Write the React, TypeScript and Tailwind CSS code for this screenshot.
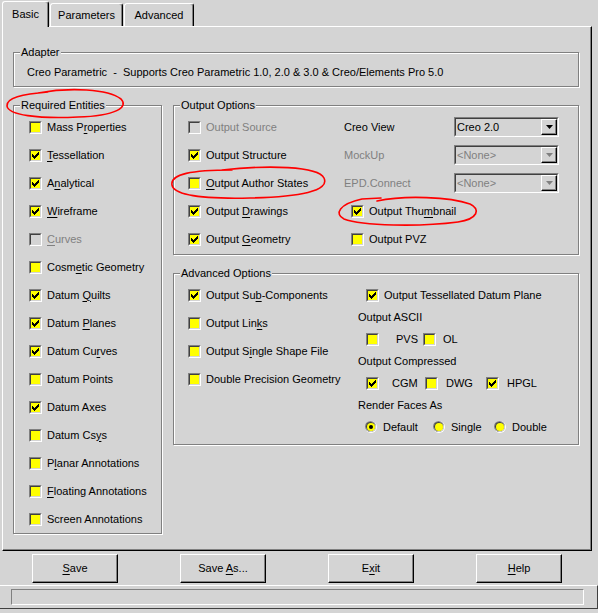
import React from "react";

// 7x7 pixel check glyph used inside the classic checkbox
const CHECK: [number, number][] = [
  [6, 0], [5, 1], [6, 1], [0, 2], [4, 2], [5, 2], [6, 2],
  [0, 3], [1, 3], [3, 3], [4, 3], [5, 3],
  [0, 4], [1, 4], [2, 4], [3, 4], [4, 4],
  [1, 5], [2, 5], [3, 5], [2, 6],
];

// "&" marks the mnemonic letter, like a Win32 resource string
function Mn({ text }: { text: string }) {
  const i = text.indexOf("&");
  if (i < 0) return <span>{text}</span>;
  return (
    <span className="whitespace-pre">
      {text.slice(0, i)}
      <u className="underline-offset-[2px]">{text[i + 1]}</u>
      {text.slice(i + 2)}
    </span>
  );
}

function Box({ checked, disabled }: { checked?: boolean; disabled?: boolean }) {
  return (
    <span className="block w-[13px] h-[13px] shrink-0 border border-t-[#808080] border-l-[#808080] border-r-white border-b-white">
      <span
        className={`flex w-[11px] h-[11px] items-center justify-center border border-t-[#404040] border-l-[#404040] border-r-[#d4d4d4] border-b-[#d4d4d4] ${
          disabled ? "bg-[#d4d4d4]" : "bg-[#ffff00]"
        }`}
      >
        {checked && (
          <svg width="7" height="7" viewBox="0 0 7 7" shapeRendering="crispEdges">
            {CHECK.map(([x, y]) => (
              <rect key={`${x}-${y}`} x={x} y={y} width="1" height="1" fill="#000" />
            ))}
          </svg>
        )}
      </span>
    </span>
  );
}

function Radio({ on }: { on?: boolean }) {
  return (
    <svg width="12" height="12" viewBox="0 0 12 12" className="shrink-0">
      <circle cx="6" cy="6" r="6" fill="#ffffff" />
      <circle cx="5.5" cy="5.5" r="5.5" fill="#808080" />
      <circle cx="6" cy="6" r="5" fill="#d4d4d4" />
      <circle cx="5.5" cy="5.5" r="4.5" fill="#404040" />
      <circle cx="6" cy="6" r="4" fill="#ffff00" />
      {on && <circle cx="6" cy="6" r="2" fill="#000" />}
    </svg>
  );
}

function CheckRow({ text, checked, disabled }: { text: string; checked?: boolean; disabled?: boolean }) {
  return (
    <div className="flex h-[28px] items-center gap-[5px]">
      <Box checked={checked} disabled={disabled} />
      <span className={disabled ? "text-[#808080]" : ""}>
        <Mn text={text} />
      </span>
    </div>
  );
}

function Group({ title, className, children }: { title: string; className: string; children: React.ReactNode }) {
  return (
    <div className={`relative border border-[#808080] shadow-[inset_1px_1px_0_#ffffff,1px_1px_0_#ffffff] ${className}`}>
      <span className="absolute left-[6px] -top-[8px] bg-[#d4d4d4] px-[1px] leading-[14px]">{title}</span>
      {children}
    </div>
  );
}

function Combo({ value, disabled }: { value: string; disabled?: boolean }) {
  return (
    <div className="flex w-[105px] h-[20px] border border-t-[#808080] border-l-[#808080] border-r-white border-b-white">
      <div className="flex flex-1 border border-t-[#404040] border-l-[#404040] border-r-[#d4d4d4] border-b-[#d4d4d4]">
        <span className={`flex-1 pl-[1px] leading-[16px] ${disabled ? "text-[#808080]" : ""}`}>{value}</span>
        <span className="flex w-[16px] items-center justify-center border border-t-white border-l-white border-r-black border-b-black shadow-[inset_-1px_-1px_0_#808080]">
          <svg width="7" height="4" viewBox="0 0 7 4">
            <polygon points="0,0 7,0 3.5,4" fill={disabled ? "#808080" : "#000"} />
          </svg>
        </span>
      </div>
    </div>
  );
}

function Btn({ text }: { text: string }) {
  return (
    <button className="flex w-[86px] h-[29px] items-center justify-center border border-t-white border-l-white border-r-black border-b-black bg-[#d4d4d4] shadow-[inset_-1px_-1px_0_#808080]">
      <Mn text={text} />
    </button>
  );
}

const required: { text: string; checked?: boolean; disabled?: boolean }[] = [
  { text: "Mass P&roperties" },
  { text: "&Tessellation", checked: true },
  { text: "A&nalytical", checked: true },
  { text: "&Wireframe", checked: true },
  { text: "&Curves", disabled: true },
  { text: "Cosm&etic Geometry" },
  { text: "Datum &Quilts", checked: true },
  { text: "Datum &Planes", checked: true },
  { text: "Datum Cu&rves", checked: true },
  { text: "Datum Points" },
  { text: "Datum Axes", checked: true },
  { text: "Datum Cs&ys" },
  { text: "P&lanar Annotations" },
  { text: "&Floating Annotations" },
  { text: "Screen Annotations" },
];

export default function App() {
  return (
    <div className="relative w-[598px] h-[613px] overflow-hidden bg-[#d4d4d4] text-[11px] leading-[13px] text-black font-['Liberation_Sans',Arial,sans-serif]">
      {/* tab strip */}
      <div className="flex h-[26px] items-end gap-[1px] pl-[2px]">
        <div className="relative z-10 -mb-px flex h-[26px] w-[47px] items-center justify-center rounded-t-[3px] border-t border-l border-r border-t-white border-l-white border-r-black bg-[#d4d4d4] shadow-[inset_-1px_0_0_#808080]">
          Basic
        </div>
        <div className="flex h-[23px] w-[73px] items-center justify-center rounded-t-[3px] border-t border-l border-r border-t-white border-l-white border-r-black shadow-[inset_-1px_0_0_#808080]">
          Parameters
        </div>
        <div className="flex h-[23px] w-[70px] items-center justify-center rounded-t-[3px] border-t border-l border-r border-t-white border-l-white border-r-black shadow-[inset_-1px_0_0_#808080]">
          Advanced
        </div>
      </div>

      {/* Basic page */}
      <div className="ml-[2px] w-[590px] h-[525px] border border-t-white border-l-white border-r-black border-b-black pl-[10px] pt-[25px] shadow-[inset_-1px_-1px_0_#808080]">
        <Group title="Adapter" className="w-[566px] h-[35px]">
          <div className="whitespace-pre pl-[13px] pt-[13px]">
            Creo Parametric  -  Supports Creo Parametric 1.0, 2.0 &amp; 3.0 &amp; Creo/Elements Pro 5.0
          </div>
        </Group>

        <div className="mt-[18px] flex items-start gap-[11px]">
          <Group title="Required Entities" className="w-[149px] h-[429px]">
            <div className="pl-[15px] pt-[7px]">
              {required.map((r) => (
                <CheckRow key={r.text} {...r} />
              ))}
            </div>
          </Group>

          <div className="flex flex-col">
            <Group title="Output Options" className="w-[406px] h-[150px]">
              <div className="flex pt-[7px]">
                <div className="w-[170px] pl-[14px]">
                  <CheckRow text="Output Source" disabled />
                  <CheckRow text="Output Structure" checked />
                  <CheckRow text="&Output Author States" />
                  <CheckRow text="Output &Drawings" checked />
                  <CheckRow text="Output &Geometry" checked />
                </div>
                <div className="flex-1">
                  <div className="flex h-[28px] items-center">
                    <span className="w-[110px]">Creo View</span>
                    <Combo value="Creo 2.0" />
                  </div>
                  <div className="flex h-[28px] items-center text-[#808080]">
                    <span className="w-[110px]">MockUp</span>
                    <Combo value="<None>" disabled />
                  </div>
                  <div className="flex h-[28px] items-center text-[#808080]">
                    <span className="w-[110px]">EPD.Connect</span>
                    <Combo value="<None>" disabled />
                  </div>
                  <div className="pl-[7px]">
                    <CheckRow text="Output Thu&mbnail" checked />
                    <CheckRow text="Output PVZ" />
                  </div>
                </div>
              </div>
            </Group>

            <Group title="Advanced Options" className="mt-[18px] w-[406px] h-[172px]">
              <div className="flex">
                <div className="w-[184px] pl-[14px] pt-[7px]">
                  <CheckRow text="Output Su&b-Components" checked />
                  <CheckRow text="Output Lin&ks" />
                  <CheckRow text="Output S&ingle Shape File" />
                  <CheckRow text="Double Precision Geometry" />
                </div>
                <div className="flex-1 pt-[10px]">
                  <div className="flex h-[22px] items-center gap-[5px] pl-[8px]">
                    <Box checked />
                    <span>Output Tessellated Datum Plane</span>
                  </div>
                  <div className="flex h-[22px] items-center">Output ASCII</div>
                  <div className="flex h-[22px] items-center pl-[8px]">
                    <div className="flex w-[57px] items-center">
                      <Box />
                      <span className="ml-[17px]">PVS</span>
                    </div>
                    <div className="flex items-center">
                      <Box />
                      <span className="ml-[7px]">OL</span>
                    </div>
                  </div>
                  <div className="flex h-[22px] items-center">Output Compressed</div>
                  <div className="flex h-[22px] items-center pl-[8px]">
                    <div className="flex w-[59px] items-center">
                      <Box checked />
                      <span className="ml-[13px]">CGM</span>
                    </div>
                    <div className="flex w-[61px] items-center">
                      <Box />
                      <span className="ml-[8px]">DWG</span>
                    </div>
                    <div className="flex items-center">
                      <Box checked />
                      <span className="ml-[8px]">HPGL</span>
                    </div>
                  </div>
                  <div className="flex h-[22px] items-center">Render Faces As</div>
                  <div className="flex h-[22px] items-center pl-[7px]">
                    <div className="flex w-[68px] items-center gap-[6px]">
                      <Radio on />
                      <span>Default</span>
                    </div>
                    <div className="flex w-[61px] items-center gap-[6px]">
                      <Radio />
                      <span>Single</span>
                    </div>
                    <div className="flex items-center gap-[6px]">
                      <Radio />
                      <span>Double</span>
                    </div>
                  </div>
                </div>
              </div>
            </Group>
          </div>
        </div>
      </div>

      {/* command buttons */}
      <div className="mt-[3px] ml-[32px] flex w-[530px] justify-between">
        <Btn text="&Save" />
        <Btn text="Save &As..." />
        <Btn text="E&xit" />
        <Btn text="&Help" />
      </div>

      {/* status line */}
      <div className="mt-[2px] h-[24px] border-t border-b border-r border-t-white border-b-[#404040] border-r-[#404040] pl-[11px] pt-[3px]">
        <div className="h-[16px] w-[573px] border border-t-[#808080] border-l-[#808080] border-r-white border-b-white" />
      </div>

      {/* red pen marks drawn over the dialog */}
      <svg className="pointer-events-none absolute inset-0" width="598" height="613" viewBox="0 0 598 613" fill="none" stroke="#ff0000" strokeWidth="1.6" strokeLinecap="round">
        <path d="M38 93 C70 87 108 89 121 99 C129 107 116 116 78 117 C38 119 8 115 7 106 C6 98 22 94 48 92" />
        <path d="M222 170 C268 165 318 166 324 178 C330 191 300 197 250 198 C205 199 174 196 172 185 C170 174 192 170 232 170" />
        <path d="M377 201 C405 195 450 197 470 204 C481 209 478 219 458 222 C420 227 362 226 344 219 C334 214 339 204 362 199 L381 198" />
      </svg>
    </div>
  );
}
